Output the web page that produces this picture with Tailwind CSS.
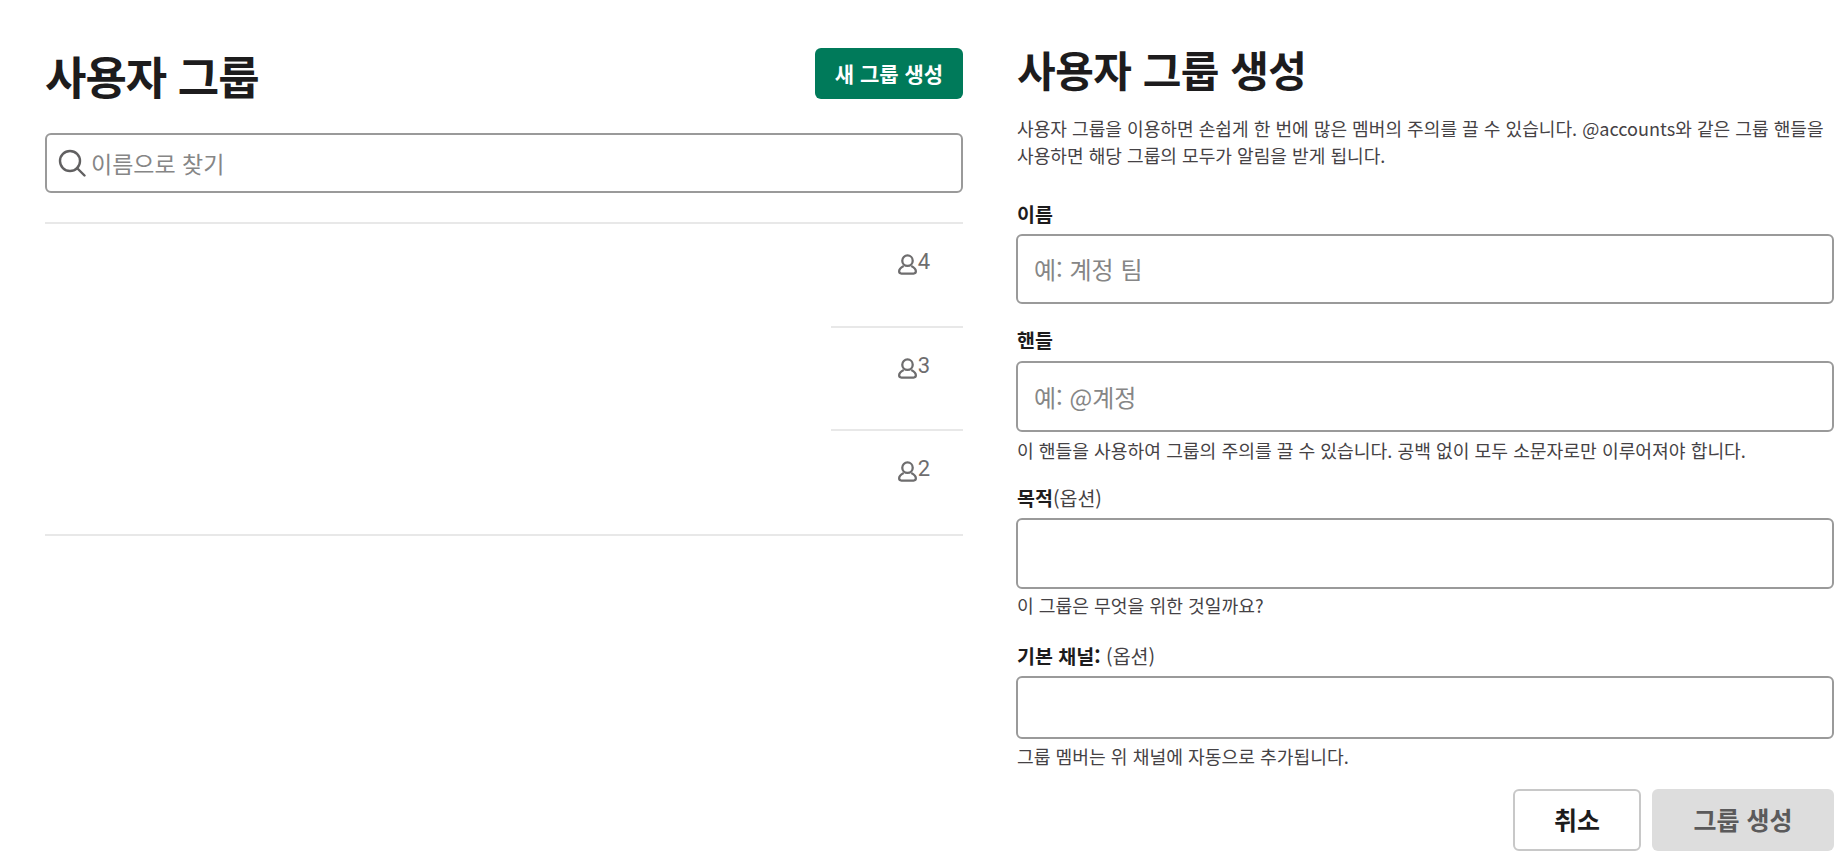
<!DOCTYPE html>
<html lang="ko">
<head>
    <meta charset="UTF-8">
    <title>사용자 그룹</title>
    <script src="https://cdn.jsdelivr.net/npm/@tailwindcss/browser@4"></script>
</head>
<body class="bg-white h-[868px] overflow-hidden font-['Noto_Sans_CJK_KR','Noto_Sans',sans-serif] text-[#1d1c1d]">
    <div class="flex pl-[45px] pr-[14px]">
        <!-- User group list -->
        <div class="w-[918px] shrink-0 pt-[48px]">
            <div class="flex justify-between items-center h-[51px]">
                <h1 class="pt-[4px] text-[45px] font-bold tracking-[-1px] leading-none">사용자 그룹</h1>
                <button class="w-[148px] h-[51px] rounded-[6px] bg-[#007a5a] text-white text-[21px] font-bold">새 그룹 생성</button>
            </div>
            <div class="mt-[34px] h-[60px] flex items-center pl-[11px] border-2 border-[#9a9a9a] rounded-[6px]">
                <svg class="w-[28px] h-[28px] text-[#616061]" viewBox="0 0 28 28" fill="none" stroke="currentColor" stroke-width="2.4" stroke-linecap="round"><circle cx="12" cy="12" r="10"/><path d="M19 19l7.5 7.5"/></svg>
                <span class="ml-[5px] text-[23px] text-[#868686]">이름으로 찾기</span>
            </div>
            <div class="mt-[29px] border-t-2 border-[#e8e8e8]">
                <div class="h-[102px] flex justify-end pr-[33px] pt-[24px]">
                    <div class="flex items-start h-[28px] text-[#6e6d6e]">
                        <svg class="w-[19px] h-[21px] mt-[6px]" viewBox="0 0 20 22" fill="none" stroke="currentColor" stroke-width="2.4"><circle cx="10" cy="7" r="5.5"/><path d="M6 12.5C3 14 1.2 16 1.2 18.2c0 1.4 1 2.3 2.4 2.3h12.8c1.4 0 2.4-.9 2.4-2.3 0-2.2-1.8-4.2-4.8-5.7"/></svg>
                        <span class="ml-[1px] mt-[3px] text-[22px] leading-[22px] font-['Roboto']">4</span>
                    </div>
                </div>
                <div class="ml-auto w-[132px] border-t-2 border-[#e8e8e8]"></div>
                <div class="h-[101px] flex justify-end pr-[33px] pt-[24px]">
                    <div class="flex items-start h-[28px] text-[#6e6d6e]">
                        <svg class="w-[19px] h-[21px] mt-[6px]" viewBox="0 0 20 22" fill="none" stroke="currentColor" stroke-width="2.4"><circle cx="10" cy="7" r="5.5"/><path d="M6 12.5C3 14 1.2 16 1.2 18.2c0 1.4 1 2.3 2.4 2.3h12.8c1.4 0 2.4-.9 2.4-2.3 0-2.2-1.8-4.2-4.8-5.7"/></svg>
                        <span class="ml-[1px] mt-[3px] text-[22px] leading-[22px] font-['Roboto']">3</span>
                    </div>
                </div>
                <div class="ml-auto w-[132px] border-t-2 border-[#e8e8e8]"></div>
                <div class="h-[103px] flex justify-end pr-[33px] pt-[24px]">
                    <div class="flex items-start h-[28px] text-[#6e6d6e]">
                        <svg class="w-[19px] h-[21px] mt-[6px]" viewBox="0 0 20 22" fill="none" stroke="currentColor" stroke-width="2.4"><circle cx="10" cy="7" r="5.5"/><path d="M6 12.5C3 14 1.2 16 1.2 18.2c0 1.4 1 2.3 2.4 2.3h12.8c1.4 0 2.4-.9 2.4-2.3 0-2.2-1.8-4.2-4.8-5.7"/></svg>
                        <span class="ml-[1px] mt-[3px] text-[22px] leading-[22px] font-['Roboto']">2</span>
                    </div>
                </div>
                <div class="border-t-2 border-[#e8e8e8]"></div>
            </div>
        </div>

        <!-- Create group form -->
        <div class="ml-[53px] w-[818px] shrink-0 pt-[44px]">
            <h2 class="pl-[1px] text-[42px] font-bold tracking-[-0.5px] leading-[50px]">사용자 그룹 생성</h2>
            <p class="mt-[21px] pl-[1px] text-[18.1px] leading-[27px] text-[#454245]">사용자 그룹을 이용하면 손쉽게 한 번에 많은 멤버의 주의를 끌 수 있습니다. @accounts와 같은 그룹 핸들을 사용하면 해당 그룹의 모두가 알림을 받게 됩니다.</p>

            <label class="block mt-[32px] pl-[1px] text-[19.5px] leading-[26px] font-bold">이름</label>
            <div class="mt-[7px] h-[70px] flex items-center px-[16px] border-2 border-[#9a9a9a] rounded-[6px] text-[24px] text-[#868686]">예: 계정 팀</div>

            <label class="block mt-[23px] pl-[1px] text-[19.5px] leading-[26px] font-bold">핸들</label>
            <div class="mt-[8px] h-[71px] flex items-center px-[16px] border-2 border-[#9a9a9a] rounded-[6px] text-[24px] text-[#868686]">예: @계정</div>
            <p class="mt-[5px] pl-[1px] text-[18.2px] leading-[26px] text-[#454245]">이 핸들을 사용하여 그룹의 주의를 끌 수 있습니다. 공백 없이 모두 소문자로만 이루어져야 합니다.</p>

            <label class="block mt-[22px] pl-[1px] text-[19.5px] leading-[26px]"><b class="font-bold">목적</b><span class="text-[#454245]">(옵션)</span></label>
            <div class="mt-[7px] h-[71px] border-2 border-[#9a9a9a] rounded-[6px]"></div>
            <p class="mt-[3px] pl-[1px] text-[18.2px] leading-[26px] text-[#454245]">이 그룹은 무엇을 위한 것일까요?</p>

            <label class="block mt-[25px] pl-[1px] text-[19.5px] leading-[26px]"><b class="font-bold">기본 채널:</b> <span class="text-[#454245]">(옵션)</span></label>
            <div class="mt-[7px] h-[63px] border-2 border-[#9a9a9a] rounded-[6px]"></div>
            <p class="mt-[4px] pl-[1px] text-[18.2px] leading-[26px] text-[#454245]">그룹 멤버는 위 채널에 자동으로 추가됩니다.</p>

            <div class="mt-[20px] flex justify-end gap-[11px]">
                <button class="w-[128px] h-[62px] rounded-[6px] border-2 border-[#c8c8c8] bg-white text-[25px] font-bold">취소</button>
                <button class="w-[182px] h-[62px] rounded-[6px] bg-[#dddddd] text-[#5b5a5b] text-[25px] font-bold">그룹 생성</button>
            </div>
        </div>
    </div>
</body>
</html>
